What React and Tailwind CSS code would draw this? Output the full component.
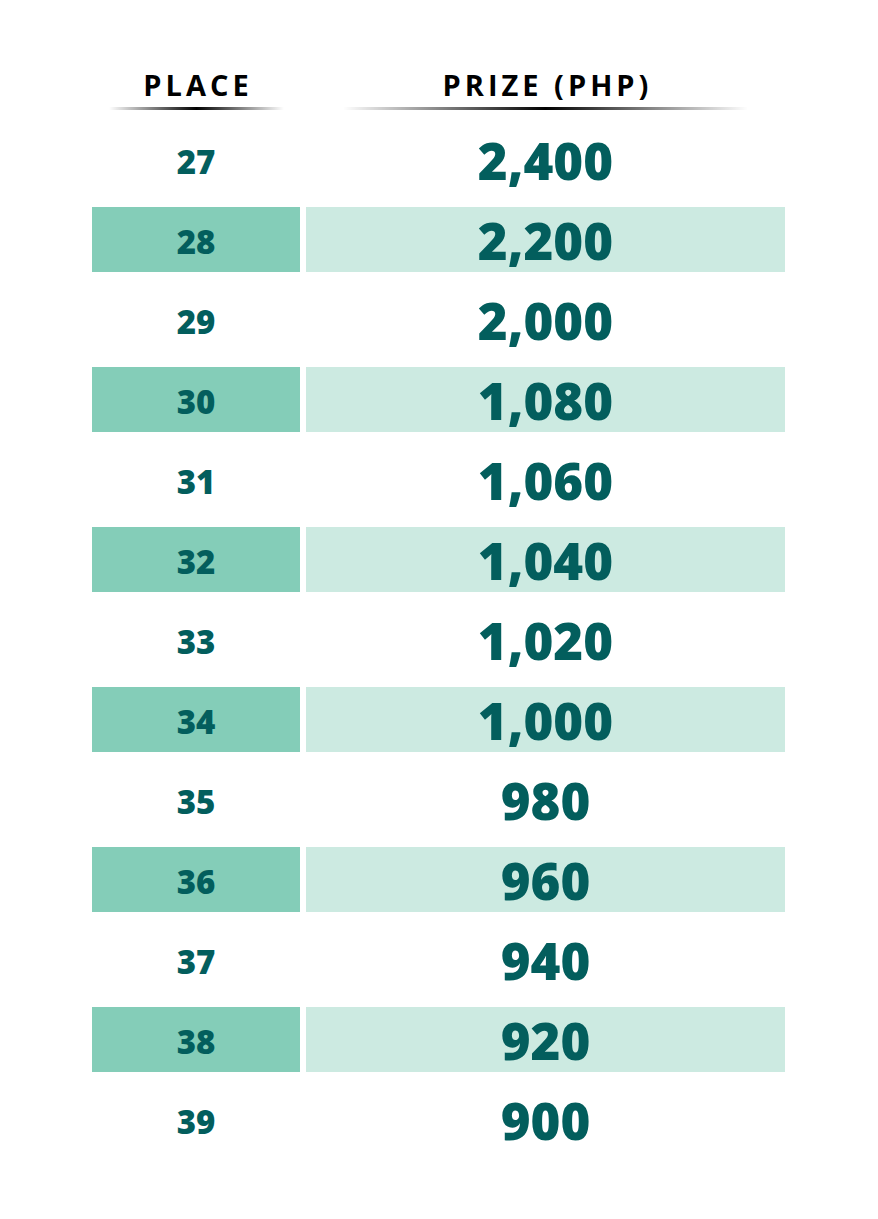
const rows = [
  { place: 27, prize: "2,400" },
  { place: 28, prize: "2,200" },
  { place: 29, prize: "2,000" },
  { place: 30, prize: "1,080" },
  { place: 31, prize: "1,060" },
  { place: 32, prize: "1,040" },
  { place: 33, prize: "1,020" },
  { place: 34, prize: "1,000" },
  { place: 35, prize: "980" },
  { place: 36, prize: "960" },
  { place: 37, prize: "940" },
  { place: 38, prize: "920" },
  { place: 39, prize: "900" },
];

const App = () => {
  return (
    <div className="w-[878px] h-[1219px] bg-white font-['Open_Sans',sans-serif] text-[#035e5d]">
      <div className="pl-[92px] pr-[93px] pt-[65px]">
        <div className="flex gap-[6px] h-[54px]">
          <div className="w-[208px] flex flex-col items-center">
            <h2 className="text-[29px] font-bold tracking-[4px] pl-[4px] text-black leading-[39px]">PLACE</h2>
            <div className="mt-[3px] w-[175px] h-[3px] rounded-full bg-[linear-gradient(90deg,rgba(0,0,0,0),#000_50%,rgba(0,0,0,0))]"></div>
          </div>
          <div className="flex-1 flex flex-col items-center">
            <h2 className="text-[29px] font-bold tracking-[4px] pl-[4px] text-black leading-[39px]">PRIZE (PHP)</h2>
            <div className="mt-[3px] w-[405px] h-[3px] rounded-full bg-[linear-gradient(90deg,rgba(0,0,0,0),#000_50%,rgba(0,0,0,0))]"></div>
          </div>
        </div>
        {rows.map((row, i) => {
          const shaded = i % 2 === 1;
          return (
            <div className="h-[80px] py-[7.5px] flex gap-[6px]" key={row.place}>
              <div className={`w-[208px] flex items-center justify-center ${shaded ? "bg-[#84cdb8]" : ""}`}>
                <span className="text-[33px] font-extrabold pt-[5px]">{row.place}</span>
              </div>
              <div className={`flex-1 flex items-center justify-center ${shaded ? "bg-[#cceae1]" : ""}`}>
                <span className="text-[51px] font-extrabold pt-[3px]">{row.prize}</span>
              </div>
            </div>
          );
        })}
      </div>
    </div>
  );
};

export default App;
